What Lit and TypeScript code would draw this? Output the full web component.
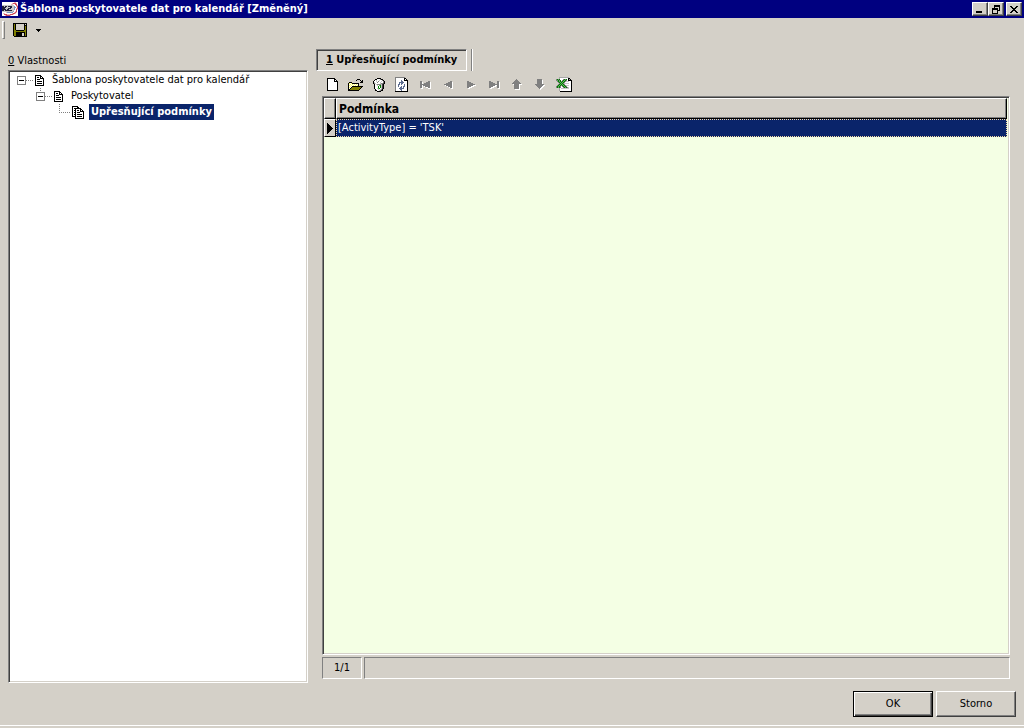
import { LitElement, html, svg, css } from "lit";
import { customElement, state } from "lit/decorators.js";
import { classMap } from "lit/directives/class-map.js";

// Pixel icons: one character per pixel, blanks stay transparent.
const PALETTE: Record<string, string> = {
  K: "#000000", W: "#ffffff", G: "#808080", D: "#404040", O: "#808000",
  Y: "#ffff66", L: "#c8c8c8", T: "#5c6c90", E: "#008000", F: "#60b060", R: "#d04858",
  B: "#7898c8", P: "#e8b8c0", N: "#20203c", S: "#d4d0c8", H: "#a8a8a8",
};

const ICONS: Record<string, string[]> = {
  logo: [
    "WWWWWWWWWWWWPPWW",
    "WWWWWWWWWWPRRRPW",
    "WWWWWWWWWPPWWRRW",
    "LLLLLLLLLLLLWWRP",
    "NNLNNLNNNNLLBWPR",
    "NNNNLLLLNNLLBBWR",
    "NNNLLLNNNLLLBWPR",
    "NNNNLNNLLLLLBWRP",
    "NNLNNNNNNNLLWWRW",
    "LLLLLLLLLLLBWPRW",
    "WWWWPBBBBBBWPRPW",
    "WPPWWWWWWWPRRPWW",
    "WWRRRPPPRRRPWWWW",
    "WWWPRRRRPWWWWWWW",
  ],
  save: [
    "KKKKKKKKKKKKKK",
    "KOKSSSSSSSSKSK",
    "KOKSSSSSSSSKKK",
    "KOKSSSSSSSSKOK",
    "KOKSSSSSSSSKOK",
    "KOKSSSSSSSSKOK",
    "KOKSSSSSSSSKOK",
    "KOOKKKKKKKKOOK",
    "KOOOOOOOOOOOOK",
    "KOOKKKKKKKKKOK",
    "KOOKKKKKKSSKOK",
    "KOOKKKKKKSSKOK",
    "KOOKKKKKKSSKOK",
    " KKKKKKKKKKKKK",
  ],
  drop: ["KKKKK", " KKK ", "  K  "],
  minimize: ["        ", "        ", "        ", "        ", "        ", "        ", "KKKKKK  ", "KKKKKK  "],
  restore: [
    "  KKKKKK",
    "  KKKKKK",
    "  K    K",
    "KKKKKK K",
    "KKKKKK K",
    "K    KKK",
    "K    K  ",
    "K    K  ",
    "KKKKKK  ",
  ],
  close: ["KK    KK", " KK  KK ", "  KKKK  ", "   KK   ", "  KKKK  ", " KK  KK ", "KK    KK"],
  doc: [
    "KKKKKK   ",
    "KWWWWKK  ",
    "KWKKWKWK ",
    "KWWWWKKKK",
    "KWKKKWWWK",
    "KWWWWWWWK",
    "KWKKKKKWK",
    "KWWWWWWWK",
    "KWKKKKKWK",
    "KWWWWWWWK",
    "KKKKKKKKK",
  ],
  docs: [
    "KKKKKK      ",
    "KWWWWKK     ",
    "KWKKKKKKK   ",
    "KWWKWWWWKK  ",
    "KWKKWKKWKWK ",
    "KWWKWWWWKKKK",
    "KWKKWKKKWWWK",
    "KWWKWWWWWWWK",
    "KWKKWKKKKKWK",
    "KWWKWWWWWWWK",
    "KKKKWKKKKKWK",
    "   KWWWWWWWK",
    "   KKKKKKKKK",
  ],
  blank: [
    "KKKKKKKK   ",
    "KWWWWWWKK  ",
    "KWWWWWWKWK ",
    "KWWWWWWKKKK",
    "KWWWWWWWWWK",
    "KWWWWWWWWWK",
    "KWWWWWWWWWK",
    "KWWWWWWWWWK",
    "KWWWWWWWWWK",
    "KWWWWWWWWWK",
    "KWWWWWWWWWK",
    "KWWWWWWWWWK",
    "KKKKKKKKKKK",
  ],
  open: [
    "         KKK    ",
    "        K   K K ",
    "             KK ",
    " KKK        KKK ",
    "KYWYKKKKKKK     ",
    "KWYWYWYWYWK     ",
    "KYWYWYWYWYK     ",
    "KWYWKKKKKKKKKKK ",
    "KYWKOOOOOOOOOK  ",
    "KWKOOOOOOOOOK   ",
    "KKOOOOOOOOOK    ",
    "KKKKKKKKKKK     ",
  ],
  trash: [
    "    KKKK    ",
    "  KKWWWGKK  ",
    " KWLWWLWWGK ",
    "KWWLWGWWLWGK",
    "KLWWGWWLWWGK",
    "KGLWWWWLGGDK",
    " KWLGGGGLDK ",
    " KWWLWFELDK ",
    " KWWWEWELDK ",
    " KWWWEWELDK ",
    " KWWLFEWLDK ",
    "  KWWLWLGK  ",
    "  KKWWLGKK  ",
    "    KKKK    ",
  ],
  refresh: [
    "GGGGGGGGGG   ",
    "GWWWWWWWWKK  ",
    "GWWWWWWWWKWK ",
    "GWWWWWTWWKKKK",
    "GWWWWWTTWWWWK",
    "GWWWTTTTTWWWK",
    "GWWWTWTTWWWWK",
    "GWWTTWTWWTWWK",
    "GWWTWWWWWTWWK",
    "GWWTWWTWTTWWK",
    "GWWWWTTWTWWWK",
    "GWWWTTTTTWWWK",
    "GWWWWTTWWWWWK",
    "GWWWWWTWWWWWK",
    "KKKKKKKKKKKKK",
  ],
  first: [
    "GG      GG ",
    "GGW   GGGGW",
    "GGW GGGGGGW",
    "GGGGGGGGGGW",
    "GGWGGGGGGGW",
    "GGW WGGGGGW",
    "GGW   WWGGW",
    " WW     WWW",
  ],
  prev: [
    "      GG ",
    "    GGGGW",
    "  GGGGGGW",
    "GGGGGGGGW",
    " WGGGGGGW",
    "   WGGGGW",
    "     WGGW",
    "       WW",
  ],
  next: [
    "GG       ",
    "GGGG     ",
    "GGGGGG   ",
    "GGGGGGGG ",
    "GGGGGGWWW",
    "GGGGWWW  ",
    "GGWWW    ",
    " WW      ",
  ],
  last: [
    "GG      GG ",
    "GGGG    GGW",
    "GGGGGG  GGW",
    "GGGGGGGGGGW",
    "GGGGGGWWGGW",
    "GGGGWWW GGW",
    "GGWWW   GGW",
    " WW      WW",
  ],
  up: [
    "    G     ",
    "   GGG    ",
    "  GGGGG   ",
    " GGGGGGG  ",
    "GGGGGGGGG ",
    " WGGGGGWWW",
    "  GGGGGW  ",
    "  GGGGGW  ",
    "  GGGGGW  ",
    "  GGGGGW  ",
    "   WWWWW  ",
  ],
  down: [
    "  GGGGG   ",
    "  GGGGGW  ",
    "  GGGGGW  ",
    "  GGGGGW  ",
    "  GGGGGW  ",
    "GGGGGGGGG ",
    " GGGGGGGWW",
    "  GGGGGWW ",
    "   GGGWW  ",
    "    GWW   ",
    "     W    ",
  ],
  excel: [
    "   HHHHHHHHHH   ",
    "   HWWWWWWWWKK  ",
    "GEGEWWWGEGEWKHK ",
    "GFEGEWGEFEGWKKKK",
    " GEFEGEFEGLLLWWK",
    "  GEFEFEGWWWWWWK",
    "   GEFEGLLLLLWWK",
    "  GEFEFEGWWWWWWK",
    " GEFEGEFEGLLLWWK",
    "GEFEGWGEFEGWWWWK",
    "GEGEGWWGEGEGLWWK",
    "   HWLLLLLLLLWWK",
    "   HWWWWWWWWWWWK",
    "   HWWWWWWWWWWWK",
    "    KKKKKKKKKKKK",
  ],
  current: ["K     ", "KK    ", "KKK   ", "KKKK  ", "KKKKK ", "KKKKKK", "KKKKK ", "KKKK  ", "KKK   ", "KK    ", "K     "],
};

function icon(name: string) {
  const rows = ICONS[name];
  const w = Math.max(...rows.map((r) => r.length));
  const shapes = new Map<string, string>();
  rows.forEach((row, y) => {
    [...row].forEach((c, x) => {
      if (c !== " ") shapes.set(c, (shapes.get(c) ?? "") + `M${x} ${y}h1v1h-1z`);
    });
  });
  return html`<svg class="icon" width=${w} height=${rows.length} viewBox="0 0 ${w} ${rows.length}"
    shape-rendering="crispEdges" aria-hidden="true">
    ${[...shapes].map(([c, d]) => svg`<path fill=${PALETTE[c]} d=${d}></path>`)}
  </svg>`;
}

const base = css`
  :host {
    font-family: "DejaVu Sans Condensed", "DejaVu Sans", sans-serif;
    font-size: 11px;
    line-height: 16px;
    color: #000;
  }
  * { box-sizing: border-box; }
  button {
    font: inherit;
    color: inherit;
    margin: 0;
    padding: 0;
    border: 0;
    background: none;
    display: flex;
    align-items: center;
    justify-content: center;
  }
  .bold { font-weight: 700; }
  .icon { display: block; flex: none; }
`;

interface Node { label: string; icon: string; children?: Node[] }

@customElement("property-tree")
export class PropertyTree extends LitElement {
  @state() private closed = new Set<string>();
  @state() private selected = "Upřesňující podmínky";

  private root: Node = {
    label: "Šablona poskytovatele dat pro kalendář",
    icon: "doc",
    children: [
      { label: "Poskytovatel", icon: "doc", children: [{ label: "Upřesňující podmínky", icon: "docs" }] },
    ],
  };

  static styles = [base, css`
    :host { display: block; }
    ul { list-style: none; margin: 0; padding: 0 0 0 7px; }
    ul ul { padding-left: 19px; }
    .row { display: flex; align-items: center; height: 16px; }
    .slot { width: 17px; height: 16px; flex: none; }
    .row > .icon { margin-left: 1px; }
    .label { padding: 0 2px; margin-left: 6px; white-space: nowrap; }
    .docs > .icon { margin-left: 0; }
    .docs .label { margin-left: 5px; }
    .selected .label { background: #0a246a; color: #fff; }
  `];

  private toggle(label: string) {
    const next = new Set(this.closed);
    next.has(label) ? next.delete(label) : next.add(label);
    this.closed = next;
  }

  private lines(node: Node, depth: number, open: boolean) {
    return html`<svg class="icon" width="17" height="16" viewBox="0 0 17 16" shape-rendering="crispEdges" fill="none">
      ${depth ? svg`<path stroke="#808080" stroke-dasharray="1 1" d="M4.5 0V8"></path>` : ""}
      <path stroke="#808080" stroke-dasharray="1 1" d=${node.children ? "M9 8.5H17" : "M4 8.5H15"}></path>
      ${node.children
        ? svg`<rect x="0.5" y="4.5" width="8" height="8" fill="#fff" stroke="#808080"></rect>
            <path stroke="#000" d=${open ? "M2 8.5H7" : "M2 8.5H7M4.5 6V11"}></path>`
        : ""}
    </svg>`;
  }

  private item(node: Node, depth: number): unknown {
    const open = !this.closed.has(node.label);
    const selected = this.selected === node.label;
    return html`<li role="treeitem" aria-expanded=${node.children ? String(open) : "false"}>
      <div class=${classMap({ row: true, docs: node.icon === "docs", selected })}>
        ${node.children
          ? html`<button class="slot" aria-label=${node.label} @click=${() => this.toggle(node.label)}>
              ${this.lines(node, depth, open)}</button>`
          : html`<span class="slot">${this.lines(node, depth, open)}</span>`}
        ${icon(node.icon)}
        <button class=${classMap({ label: true, bold: selected })} @click=${() => (this.selected = node.label)}>${node.label}</button>
      </div>
      ${node.children && open
        ? html`<ul role="group">${node.children.map((n) => this.item(n, depth + 1))}</ul>`
        : ""}
    </li>`;
  }

  render() {
    return html`<ul role="tree">${this.item(this.root, 0)}</ul>`;
  }
}

@customElement("condition-grid")
export class ConditionGrid extends LitElement {
  private rows = ["[ActivityType] = 'TSK'"];

  static styles = [base, css`
    :host { display: block; }
    table { width: 100%; padding-right: 1px; border-collapse: separate; border-spacing: 0; table-layout: fixed; }
    th, td { padding: 0; text-align: left; }
    .mark { width: 12px; }
    .head {
      height: 21px;
      background: #d4d0c8;
      border: 1px solid;
      border-color: #fff #000 #000 #fff;
      box-shadow: inset -1px -1px #808080;
      font-size: 12px;
      line-height: 18px;
      padding-left: 2px;
    }
    .current {
      height: 18px;
      background: #d4d0c8;
      border: 1px solid;
      border-color: #fff #000 #000 #fff;
      padding-left: 2px;
    }
    .cell {
      height: 18px;
      background: #0a246a;
      color: #fff;
      border: 1px dotted #f5dba5;
      padding-left: 1px;
      line-height: 16px;
    }
  `];

  render() {
    return html`<table>
      <thead><tr><th class="head mark" aria-label="Aktuální"></th><th class="head bold">Podmínka</th></tr></thead>
      <tbody>${this.rows.map((r) => html`<tr><td class="current">${icon("current")}</td><td class="cell">${r}</td></tr>`)}</tbody>
    </table>`;
  }
}

@customElement("app-root")
export class AppRoot extends LitElement {
  private tools = [
    { icon: "blank", label: "Nový" }, { icon: "open", label: "Otevřít" },
    { icon: "trash", label: "Smazat" }, { icon: "refresh", label: "Obnovit" },
    { icon: "first", label: "První", off: true }, { icon: "prev", label: "Předchozí", off: true },
    { icon: "next", label: "Další", off: true }, { icon: "last", label: "Poslední", off: true },
    { icon: "up", label: "Nahoru", off: true }, { icon: "down", label: "Dolů", off: true },
    { icon: "excel", label: "Excel" },
  ];

  static styles = [base, css`
    :host {
      display: flex;
      flex-direction: column;
      height: 100vh;
      background: #d4d0c8;
      overflow: hidden;
    }
    .title {
      display: flex;
      align-items: center;
      gap: 2px;
      height: 18px;
      padding: 0 2px;
      background: #000080;
      color: #fff;
    }
    .title h1 { flex: 1; margin: 0; font-size: 11px; line-height: 18px; }
    .pair { display: flex; }
    .win {
      width: 16px;
      height: 14px;
      background: #d4d0c8;
      border: 1px solid;
      border-color: #fff #404040 #404040 #fff;
      box-shadow: inset -1px -1px #808080;
    }
    .bar { display: flex; align-items: center; height: 24px; padding: 0 2px; }
    .grip { width: 3px; height: 18px; border: 1px solid; border-color: #fff #808080 #808080 #fff; }
    .save { margin-left: 8px; }
    .more { margin-left: 9px; }
    .main { flex: 1; min-height: 0; display: grid; grid-template-columns: 300px 1fr; gap: 8px; padding: 0 14px 0 8px; }
    .side { display: flex; flex-direction: column; padding-top: 10px; }
    .side h2 { margin: 0; font-size: 11px; font-weight: 400; line-height: 18px; }
    .sunken {
      border: 1px solid;
      border-color: #808080 #fff #fff #808080;
      box-shadow: inset 1px 1px #404040, inset -1px -1px #d4d0c8;
      padding: 1px;
    }
    .tree { flex: 1; background: #fff; }
    .work { display: flex; flex-direction: column; min-width: 0; padding-top: 7px; }
    .tabs { display: flex; gap: 4px; height: 22px; }
    .tab {
      padding: 0 9px;
      border: 1px solid;
      border-color: #808080 #fff #fff #808080;
      box-shadow: inset 1px 1px #404040;
    }
    .edge { width: 2px; height: 22px; border-left: 1px solid #808080; border-right: 1px solid #fff; }
    .tools { display: flex; align-items: center; height: 25px; padding: 2px 0 0 5px; }
    .tool { width: 23px; height: 23px; }
    .tool:disabled { padding-left: 1px; }
    .tool:last-child { margin-left: 1px; }
    .pane { flex: 1; min-height: 0; display: flex; flex-direction: column; padding-left: 6px; gap: 2px; }
    .grid { flex: 1; background: #f4ffe4; }
    .status { display: grid; grid-template-columns: 40px 1fr; gap: 2px; height: 20px; margin-bottom: 6px; }
    .cell { border: 1px solid; border-color: #808080 #fff #fff #808080; text-align: center; line-height: 20px; }
    .foot { display: flex; justify-content: flex-end; gap: 3px; padding: 8px 8px 8px; border-bottom: 1px solid #fff; margin-bottom: 2px; }
    .btn {
      width: 80px;
      height: 26px;
      border: 1px solid;
      border-color: #fff #404040 #404040 #fff;
      box-shadow: inset -1px -1px #808080;
    }
    .btn.default { border-color: #000; box-shadow: inset 1px 1px #fff, inset -1px -1px #404040, inset -2px -2px #808080; }
  `];

  render() {
    return html`
      <header class="title">
        ${icon("logo")}
        <h1 class="bold">Šablona poskytovatele dat pro kalendář [Změněný]</h1>
        <div class="pair">
          <button class="win" aria-label="Minimalizovat">${icon("minimize")}</button>
          <button class="win" aria-label="Obnovit okno">${icon("restore")}</button>
        </div>
        <button class="win" aria-label="Zavřít">${icon("close")}</button>
      </header>
      <div class="bar" role="toolbar">
        <span class="grip"></span>
        <button class="save" aria-label="Uložit">${icon("save")}</button>
        <button class="more" aria-label="Možnosti uložení">${icon("drop")}</button>
      </div>
      <main class="main">
        <section class="side">
          <h2><u>0</u> Vlastnosti</h2>
          <property-tree class="sunken tree"></property-tree>
        </section>
        <section class="work">
          <div class="tabs" role="tablist">
            <button class="tab bold" role="tab" aria-selected="true"><span><u>1</u> Upřesňující podmínky</span></button>
            <span class="edge"></span>
          </div>
          <div class="tools" role="toolbar">
            ${this.tools.map((t) => html`<button class="tool" aria-label=${t.label} ?disabled=${!!t.off}>${icon(t.icon)}</button>`)}
          </div>
          <div class="pane">
            <condition-grid class="sunken grid"></condition-grid>
            <div class="status"><span class="cell">1/1</span><span class="cell"></span></div>
          </div>
        </section>
      </main>
      <footer class="foot">
        <button class="btn default">OK</button>
        <button class="btn">Storno</button>
      </footer>
    `;
  }
}
